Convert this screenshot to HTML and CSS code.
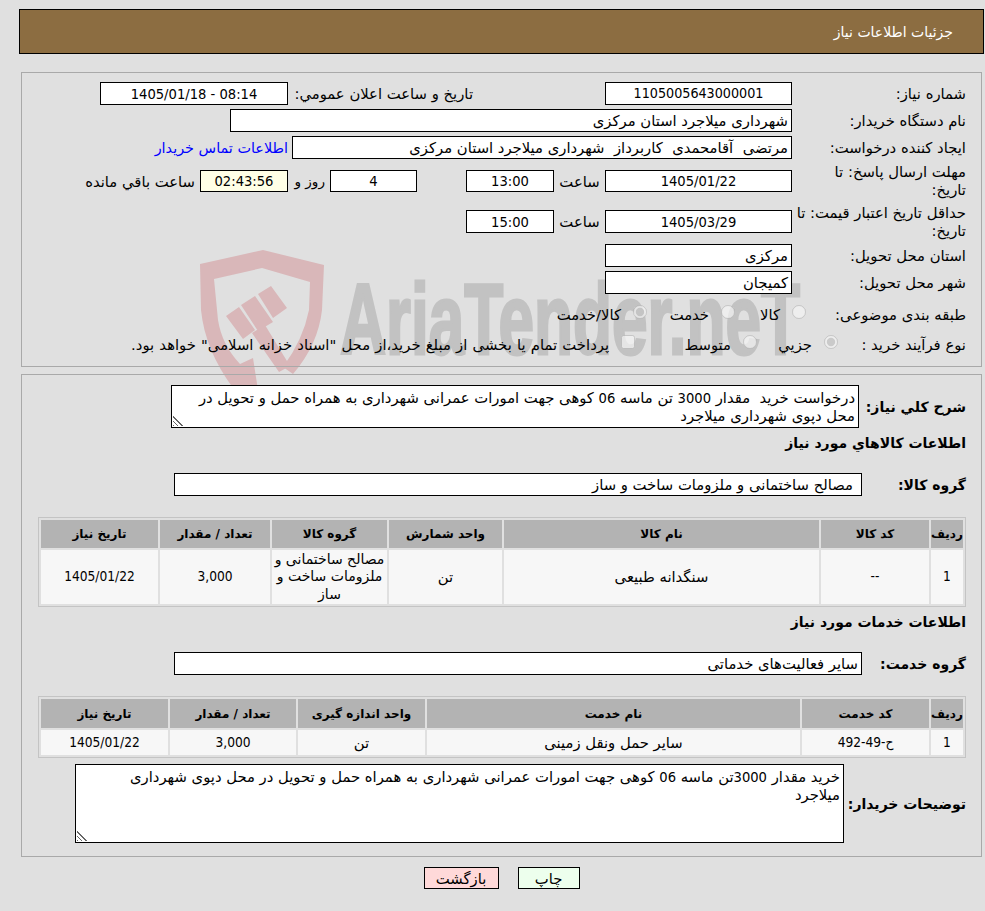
FILE: index.html
```html
<!DOCTYPE html>
<html lang="fa" dir="rtl">
<head>
<meta charset="utf-8">
<title>جزئیات اطلاعات نیاز</title>
<link rel="stylesheet" href="styles.css">
</head>
<body>
<svg class="watermark" width="985" height="911" viewBox="0 0 985 911" aria-hidden="true">
  <path class="wm-red" d="M200 264 L263 250 L324 265 L322 310 Q318 345 293 374 L283 367 Q303 340 309 310 L310 282 L262 268 L214 279 L218 320 Q222 345 240 364 L253 358 L258 390 L233 388 Q205 350 201 310 Z"/>
  <path class="wm-red" d="M226 316 L239 307 L255 330 L243 339 Z M241 305 L255 296 L273 322 L258 331 Z M258 294 L271 286 L287 308 L273 318 Z M252 333 L265 325 L290 366 L279 372 Z"/>
  <text class="wm-text" x="340" y="354" textLength="460" lengthAdjust="spacingAndGlyphs" direction="ltr">AriaTender.neT</text>
</svg>
<main class="page">
  <header class="title-bar">جزئیات اطلاعات نیاز</header>

  <section class="card card-top">
    <div class="row row-a">
      <label class="lbl">شماره نیاز:</label>
      <div class="box w187 center tight">1105005643000001</div>
      <label class="lbl-announce">تاریخ و ساعت اعلان عمومي:</label>
      <div class="box w188 center" dir="ltr">1405/01/18 - 08:14</div>
    </div>
    <div class="row row-b">
      <label class="lbl">نام دستگاه خریدار:</label>
      <div class="box w562">شهرداری میلاجرد استان مرکزی</div>
    </div>
    <div class="row row-c">
      <label class="lbl">ایجاد کننده درخواست:</label>
      <div class="box w500">مرتضی &nbsp;آقامحمدی &nbsp;کاربرداز &nbsp;شهرداری میلاجرد استان مرکزی</div>
      <a class="contact" href="#">اطلاعات تماس خریدار</a>
    </div>
    <div class="row row-d">
      <label class="lbl">مهلت ارسال پاسخ: تا<br>تاریخ:</label>
      <div class="box w187 h22 center">1405/01/22</div>
      <span class="unit">ساعت</span>
      <div class="box w88 h22 center">13:00</div>
      <div class="box w87 h22 center days">4</div>
      <span class="rooz">روز و</span>
      <div class="box w88 h22 center remain">02:43:56</div>
      <span class="rest">ساعت باقي مانده</span>
    </div>
    <div class="row row-e">
      <label class="lbl">حداقل تاریخ اعتبار قیمت: تا<br>تاریخ:</label>
      <div class="box w187 center">1405/03/29</div>
      <span class="unit">ساعت</span>
      <div class="box w88 center">15:00</div>
    </div>
    <div class="row row-f">
      <label class="lbl">استان محل تحویل:</label>
      <div class="box w187">مرکزی</div>
    </div>
    <div class="row row-g">
      <label class="lbl">شهر محل تحویل:</label>
      <div class="box w187">کمیجان</div>
    </div>
    <div class="row row-h">
      <label class="lbl">طبقه بندی موضوعی:</label>
      <span class="opt o1"><input type="radio" name="cat" disabled><span>کالا</span></span>
      <span class="opt o2"><input type="radio" name="cat" disabled><span>خدمت</span></span>
      <span class="opt o3"><input type="radio" name="cat" disabled checked><span>کالا/خدمت</span></span>
    </div>
    <div class="row row-i">
      <label class="lbl">نوع فرآیند خرید :</label>
      <span class="opt p1"><input type="radio" name="proc" disabled checked><span>جزيي</span></span>
      <span class="opt p2"><input type="radio" name="proc" disabled><span>متوسط</span></span>
      <span class="opt p3"><input type="checkbox" disabled><span class="long">پرداخت تمام یا بخشی از مبلغ خرید،از محل "اسناد خزانه اسلامی" خواهد بود.</span></span>
    </div>
  </section>

  <section class="card card-bottom">
    <div class="row desc-row">
      <label class="blbl">شرح کلي نیاز:</label>
      <div class="area area-1">درخواست خرید &nbsp;مقدار <span class="num">3000</span> تن ماسه <span class="num">06</span> کوهی جهت امورات عمرانی شهرداری به همراه حمل و تحویل در محل دپوی شهرداری میلاجرد<i class="grip"></i></div>
    </div>
    <h2 class="sub sub-goods">اطلاعات کالاهاي مورد نیاز</h2>
    <div class="row group-row">
      <label class="blbl">گروه کالا:</label>
      <div class="box group-box pad">مصالح ساختمانی و ملزومات ساخت و ساز</div>
    </div>
    <table class="grid goods">
      <colgroup><col class="g1"><col class="g2"><col class="g3"><col class="g4"><col class="g5"><col class="g6"><col class="g7"></colgroup>
      <thead><tr><th>ردیف</th><th>کد کالا</th><th>نام کالا</th><th>واحد شمارش</th><th>گروه کالا</th><th>تعداد / مقدار</th><th>تاریخ نیاز</th></tr></thead>
      <tbody><tr><td class="num">1</td><td class="num">--</td><td>سنگدانه طبیعی</td><td>تن</td><td class="nowrap">مصالح ساختمانی و<br>ملزومات ساخت و<br>ساز</td><td class="num">3,000</td><td class="num">1405/01/22</td></tr></tbody>
    </table>
    <h2 class="sub sub-services">اطلاعات خدمات مورد نیاز</h2>
    <div class="row group-row">
      <label class="blbl">گروه خدمت:</label>
      <div class="box group-box">سایر فعالیت‌های خدماتی</div>
    </div>
    <table class="grid services">
      <colgroup><col class="s1"><col class="s2"><col class="s3"><col class="s4"><col class="s5"><col class="s6"></colgroup>
      <thead><tr><th>ردیف</th><th>کد خدمت</th><th>نام خدمت</th><th>واحد اندازه گیری</th><th>تعداد / مقدار</th><th>تاریخ نیاز</th></tr></thead>
      <tbody><tr><td class="num">1</td><td class="num">ح-49-492</td><td>سایر حمل ونقل زمینی</td><td>تن</td><td class="num">3,000</td><td class="num">1405/01/22</td></tr></tbody>
    </table>
    <div class="row note-row">
      <label class="blbl">توضیحات خریدار:</label>
      <div class="area area-2">خرید مقدار <span class="num">3000</span>تن ماسه <span class="num">06</span> کوهی جهت امورات عمرانی شهرداری به همراه حمل و تحویل در محل دپوی شهرداری میلاجرد<i class="grip"></i></div>
    </div>
  </section>

  <div class="actions">
    <button class="btn print">چاپ</button>
    <button class="btn back">بازگشت</button>
  </div>
</main>
</body>
</html>
```
FILE: styles.css
```css
* { box-sizing: border-box; }
html, body { margin: 0; padding: 0; }
body {
  width: 985px; height: 911px; overflow: hidden; position: relative;
  background: #e0e0e0; color: #000;
  font-family: "DejaVu Sans", sans-serif; font-size: 14.8px;
}
.num, .center { font-family: "DejaVu Sans Condensed", "DejaVu Sans", sans-serif; font-size: 14.6px; }
.tight { font-size: 14.2px; }
.watermark { position: absolute; left: 0; top: 0; }
.wm-red { fill: #d9b7b9; }
.wm-text { fill: #c2c2c2; stroke: #c2c2c2; stroke-width: 3px; font-family: "Liberation Sans", sans-serif; font-weight: 700; font-size: 100px; }
.page { position: relative; padding: 9px 1px 0 19px; }
.title-bar {
  height: 45px; background: #8c6d41; border: 1px solid #000; color: #fff;
  padding: 12px 30px 0 0; font-size: 14px; line-height: 20px;
}
.card { border: 1px solid #a9a9a9; margin: 0 2px; }
.card-top { height: 295px; margin-top: 18px; padding-top: 9px; }
.card-bottom { height: 483px; margin-top: 7px; padding-top: 10px; }
.row { display: flex; align-items: center; height: 23px; }
.lbl { width: 189px; flex: none; padding-right: 15px; line-height: 18px; white-space: nowrap; }
.box {
  background: #fff; border: 1px solid #000; height: 23px; line-height: 21px;
  padding: 0 3px; flex: none; white-space: nowrap; overflow: hidden;
}
.center { text-align: center; padding: 0; }
.h22 { height: 22px; line-height: 20px; }
.w187 { width: 187px; }
.w188 { width: 188px; }
.w88 { width: 88px; }
.w87 { width: 87px; }
.w562 { width: 562px; }
.w500 { width: 500px; }
.lbl-announce { width: 317px; flex: none; padding-right: 132px; white-space: nowrap; }
.row-b, .row-c, .row-g { margin-top: 4px; }
.contact { color: #00f; text-decoration: none; margin-right: 4px; white-space: nowrap; font-size: 14.4px; }
.row-d { margin-top: 11px; height: 22px; }
.row-e { margin-top: 18px; }
.row-f { margin-top: 11px; }
.row-h { margin-top: 9px; }
.row-i { margin-top: 7px; }
.unit { width: 51px; text-align: center; flex: none; }
.days { margin-right: 49px; }
.rooz { width: 42px; padding-right: 5px; flex: none; font-size: 13.6px; white-space: nowrap; }
.remain { background: #ffffe6; }
.rest { margin-right: 5px; white-space: nowrap; }
.row-h .lbl { width: 175px; }
.row-i .lbl { width: 143px; }
.opt { display: flex; align-items: center; white-space: nowrap; flex: none; }
.opt input { margin: 0 0 5px 0; width: 14px; height: 14px; flex: none; }
.opt > span { margin-right: 12px; }
.opt > .long { word-spacing: 0.5px; }
.o1 { width: 71px; }
.o2 { width: 88px; }
.p1 { width: 81px; }
.p2 { width: 122px; }
.sub { margin: 0; font-size: 14px; font-weight: 700; line-height: 20px; padding-right: 15px; }
.blbl { font-weight: 700; font-size: 14px; flex: none; white-space: nowrap; padding-right: 15px; }
.desc-row { height: 43px; }
.desc-row .blbl { width: 122px; }
.group-row .blbl { width: 119px; }
.note-row .blbl { width: 137px; }
.area {
  position: relative; background: #fff; border: 1px solid #000; padding: 3px 3px 0; line-height: 18px; flex: none;
}
.area-1 { width: 688px; height: 43px; }
.sub-goods { margin-top: 5px; }
.group-row { margin-top: 20px; }
.group-box { width: 688px; }
.pad { padding-right: 8px; }
.grid { border-collapse: separate; border-spacing: 2px; border: 1px solid #c4c4c4; table-layout: fixed; width: 928px; margin: 21px 15px 0 0; }
.grid th { background: #b3b3b3; font-size: 12px; font-weight: 700; padding: 0; text-align: center; }
.grid td { background: #f7f7f7; padding: 0; text-align: center; line-height: 17.5px; }
.grid td.num { font-size: 13.6px; }
.grid td.nowrap { white-space: nowrap; font-size: 14px; }
.goods th { height: 28px; }
.goods td { height: 54px; }
.g1 { width: 32px; } .g2 { width: 108px; } .g3 { width: 315px; } .g4 { width: 113px; } .g5 { width: 115px; } .g6 { width: 110px; } .g7 { width: 117px; }
.sub-services { margin-top: 5px; }
.services th { height: 29px; }
.services td { height: 25px; }
.s1 { width: 32px; } .s2 { width: 127px; } .s3 { width: 373px; } .s4 { width: 127px; } .s5 { width: 126px; } .s6 { width: 127px; }
.note-row { margin-top: 6px; height: 79px; }
.area-2 { width: 769px; height: 79px; padding-left: 30px; }
.grip {
  position: absolute; left: 1px; bottom: 1px; width: 11px; height: 11px;
  background: repeating-linear-gradient(45deg, #666 0 1.2px, transparent 1.2px 3px);
  clip-path: polygon(0 0, 100% 100%, 0 100%);
}
.actions { display: flex; justify-content: center; gap: 19px; margin-top: 10px; }
.btn { height: 22px; border: 1px solid #000; padding: 0; font: 14.8px "DejaVu Sans", sans-serif; color: #000; }
.print { width: 62px; background: #edffed; }
.back { width: 75px; background: #ffd9d9; }
```
